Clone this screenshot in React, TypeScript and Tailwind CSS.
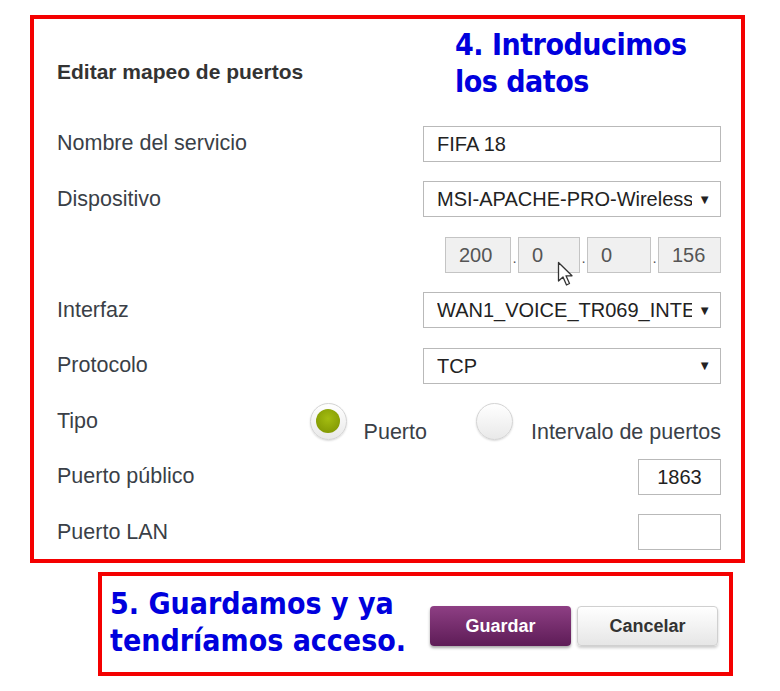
import React from 'react'

const LABEL = 'text-[21.5px] leading-none text-[#3a3f47]'
const FIELD =
  'h-[36px] border border-[#b9b9b9] bg-white px-[13px] flex items-center text-[20px] text-[#222] leading-none'

function Select({ value }: { value: string }) {
  return (
    <div className={`${FIELD} w-[298px] justify-between pr-[9px]`}>
      <span className="whitespace-nowrap overflow-hidden leading-[26px]">{value}</span>
      <span className="text-[13px] ml-[6px]">▼</span>
    </div>
  )
}

function Radio({ checked }: { checked?: boolean }) {
  return (
    <span className="w-[37px] h-[37px] rounded-full border border-[#d4d4d4] bg-gradient-to-b from-white to-[#e9e9e9] shadow-[0_1px_2px_rgba(0,0,0,0.15)] flex items-center justify-center shrink-0">
      {checked && (
        <span className="w-[24px] h-[24px] rounded-full bg-[radial-gradient(circle_at_50%_40%,#a4bd10,#7a9000)]" />
      )}
    </span>
  )
}

function IpBox({ v, w }: { v: string; w: string }) {
  return (
    <div className={`h-[36px] ${w} border border-[#c4c4c4] bg-[#f0f0f0] px-[13px] flex items-center text-[20px] text-[#555] leading-none`}>
      {v}
    </div>
  )
}

function Dot() {
  return <span className="w-[7px] self-end pb-[8px] text-center text-[15px] leading-none text-[#555]">.</span>
}

function Row({ label, children }: { label?: string; children: React.ReactNode }) {
  return (
    <div className="h-[55.5px] flex items-center justify-between">
      <span className={LABEL}>{label}</span>
      {children}
    </div>
  )
}

export default function App() {
  const note = "font-['DejaVu_Sans_Condensed','DejaVu_Sans',sans-serif] font-bold text-[#0000dd]"
  return (
    <div className="w-[780px] h-[691px] bg-white font-['Liberation_Sans',Arial,sans-serif] pt-[15px] relative">
      <div className="ml-[30px] w-[715px] h-[548px] border-4 border-[#f40000] relative pl-[23px] pr-[20px]">
        <div className={`${note} absolute left-[421px] top-[7px] text-[30px] leading-[37px] tracking-[-0.5px]`}>
          4. Introducimos
          <br />
          los datos
        </div>
        <h2 className="pt-[42px] h-[97px] text-[21px] font-bold text-[#333] leading-none">Editar mapeo de puertos</h2>
        <Row label="Nombre del servicio">
          <div className={`${FIELD} w-[298px]`}>FIFA 18</div>
        </Row>
        <Row label="Dispositivo">
          <Select value="MSI-APACHE-PRO-Wireless" />
        </Row>
        <Row>
          <div className="flex relative">
            <IpBox v="200" w="w-[66px]" />
            <Dot />
            <IpBox v="0" w="w-[62px]" />
            <Dot />
            <IpBox v="0" w="w-[64px]" />
            <Dot />
            <IpBox v="156" w="w-[63px]" />
            <svg className="absolute left-[112px] top-[24px]" width="18" height="26" viewBox="0 0 18 26">
              <path d="M1.5 1.5 L1.5 20 L6 16 L9.5 24 L12.5 22.5 L9 14.8 L15 14.8 Z" fill="white" stroke="#333" strokeWidth="1.3" strokeLinejoin="round" />
            </svg>
          </div>
        </Row>
        <Row label="Interfaz">
          <Select value="WAN1_VOICE_TR069_INTE" />
        </Row>
        <Row label="Protocolo">
          <Select value="TCP" />
        </Row>
        <Row label="Tipo">
          <div className="flex items-end">
            <Radio checked />
            <span className="ml-[17px] text-[21.5px] leading-none text-[#3a3f47] -mb-[4px]">Puerto</span>
            <span className="ml-[49px]">
              <Radio />
            </span>
            <span className="ml-[18px] text-[21.5px] leading-none text-[#3a3f47] -mb-[4px]">Intervalo de puertos</span>
          </div>
        </Row>
        <Row label="Puerto público">
          <div className={`${FIELD} w-[83px] justify-center`}>1863</div>
        </Row>
        <Row label="Puerto LAN">
          <div className={`${FIELD} w-[83px]`} />
        </Row>
      </div>

      <div className="ml-[98px] mt-[9px] w-[635px] h-[104px] border-4 border-[#f40000] flex items-center pl-[8px]">
        <div className={`${note} text-[30px] leading-[37px] w-[320px] -mt-[4px]`}>
          5. Guardamos y ya
          <br />
          tendríamos acceso.
        </div>
        <div className="flex gap-[6px] mt-[4px]">
          <button className="w-[141px] h-[40px] rounded-[4px] bg-gradient-to-b from-[#8e3f84] to-[#5e1c57] text-white font-bold text-[18px] shadow-[0_2px_3px_rgba(0,0,0,0.35)]">
            Guardar
          </button>
          <button className="w-[141px] h-[40px] rounded-[4px] border border-[#d0d0d0] bg-gradient-to-b from-white to-[#e6e6e6] text-[#333] font-bold text-[18px] shadow-[0_2px_3px_rgba(0,0,0,0.2)]">
            Cancelar
          </button>
        </div>
      </div>
    </div>
  )
}
